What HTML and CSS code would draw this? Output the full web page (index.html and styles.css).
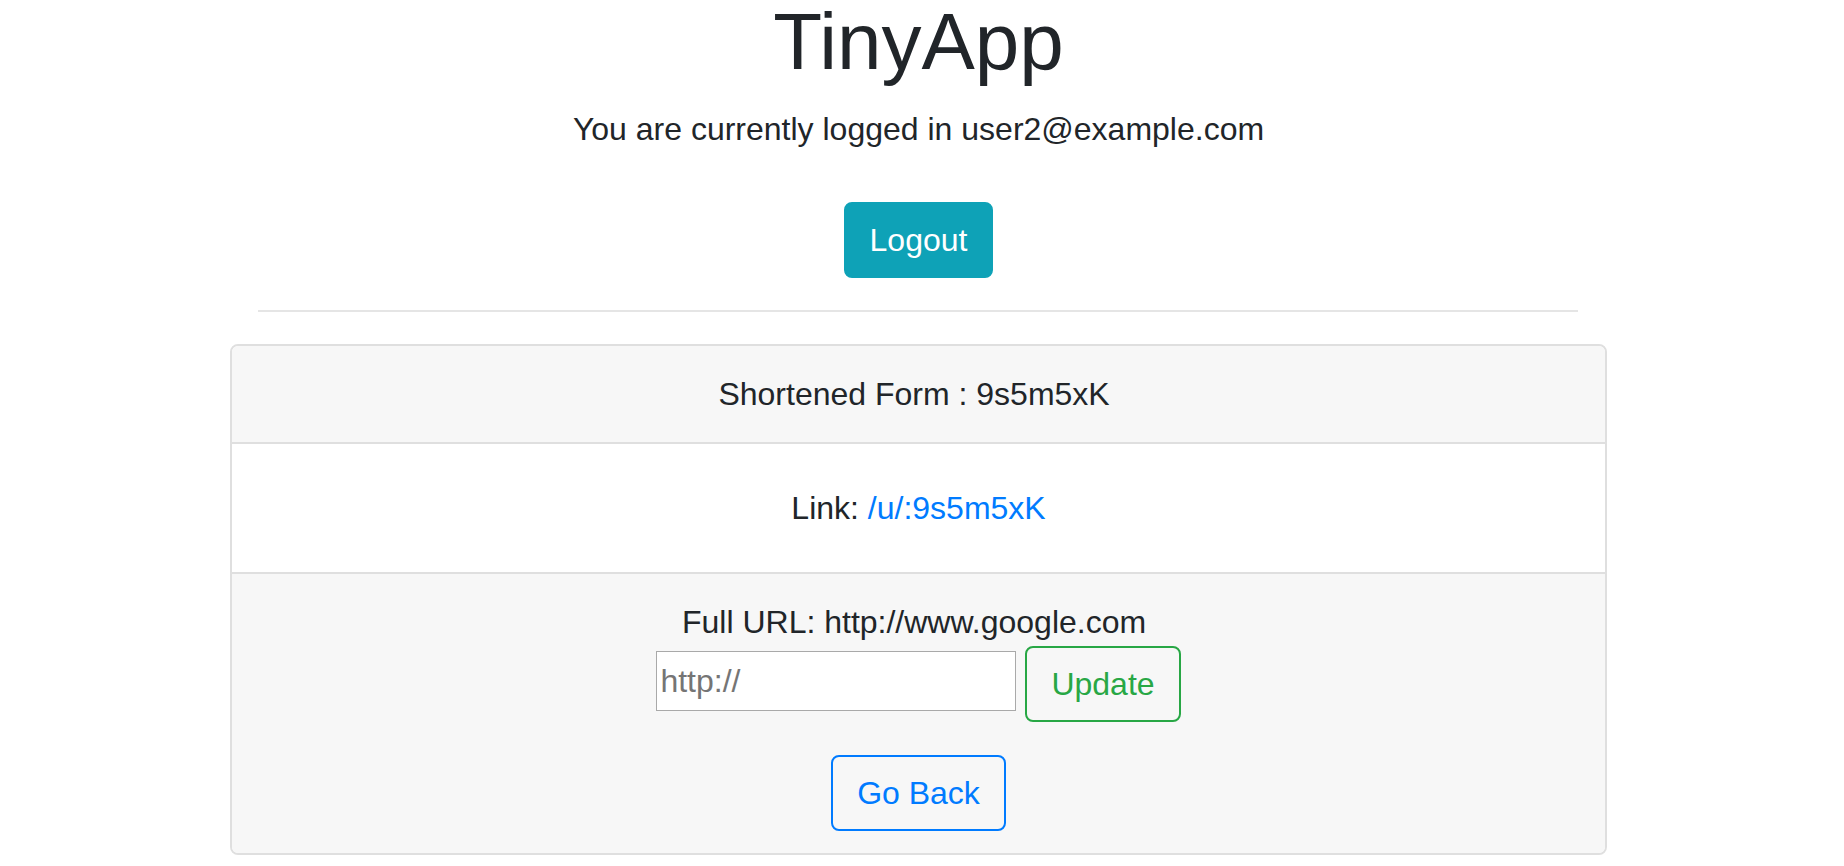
FILE: index.html
```html
<!DOCTYPE html>
<html lang="en">
<head>
<meta charset="utf-8">
<title>TinyApp</title>
<link rel="stylesheet" href="styles.css">
</head>
<body>
<div class="page">
  <header class="top">
    <h1 class="title">TinyApp</h1>
    <p class="status">You are currently logged in user2@example.com</p>
    <form class="logout-form">
      <button type="button" class="btn btn-info">Logout</button>
    </form>
  </header>
  <hr class="divider">
  <section class="card">
    <div class="card-header">Shortened Form : 9s5m5xK&nbsp;</div>
    <div class="card-body">Link: <a class="link" href="#">/u/:9s5m5xK</a></div>
    <div class="card-footer">
      <div class="full-url">Full URL: http://www.google.com&nbsp;</div>
      <form class="update-row">
        <input class="url-input" type="text" placeholder="http://">
        <button type="button" class="btn btn-outline-success">Update</button>
      </form>
      <div class="back-row">
        <button type="button" class="btn btn-outline-primary">Go Back</button>
      </div>
    </div>
  </section>
</div>
</body>
</html>
```

FILE: styles.css
```css
html, body {
  margin: 0;
  padding: 0;
  background: #ffffff;
}

body {
  font-family: "Liberation Sans", Arial, sans-serif;
  font-size: 32px;
  line-height: 48px;
  color: #212529;
}

.page {
  width: 1837px;
  display: flex;
  flex-direction: column;
  align-items: center;
}

.top {
  display: flex;
  flex-direction: column;
  align-items: center;
}

.title {
  margin: 0;
  font-size: 80px;
  line-height: 84px;
  font-weight: 400;
  color: #212529;
}

.status {
  margin: 21px 0 0 0;
}

.logout-form {
  margin: 49px 0 0 0;
}

.btn {
  font-family: "Liberation Sans", Arial, sans-serif;
  font-size: 32px;
  line-height: 48px;
  padding: 12px 24px;
  border: 2px solid transparent;
  border-radius: 8px;
  background: transparent;
  cursor: pointer;
  display: inline-block;
}

.btn-info {
  background: #0ea2b7;
  border-color: #0ea2b7;
  color: #ffffff;
}

.btn-outline-success {
  color: #28a745;
  border-color: #28a745;
}

.btn-outline-primary {
  color: #007bff;
  border-color: #007bff;
}

.divider {
  width: 1320px;
  margin: 32px 0 0 -1px;
  border: 0;
  border-top: 2px solid #e5e5e5;
  height: 0;
}

.card {
  width: 1377px;
  box-sizing: border-box;
  margin-top: 32px;
  border: 2px solid #dfdfdf;
  border-radius: 8px;
  display: flex;
  flex-direction: column;
  text-align: center;
  overflow: hidden;
}

.card-header {
  background: #f7f7f7;
  padding: 24px 40px;
  border-bottom: 2px solid #dfdfdf;
}

.card-body {
  background: #ffffff;
  padding: 40px;
}

.link {
  color: #007bff;
  text-decoration: none;
}

.card-footer {
  background: #f7f7f7;
  border-top: 2px solid #dfdfdf;
  padding: 24px 40px 22px;
  display: flex;
  flex-direction: column;
  align-items: center;
}

.update-row {
  margin: 0;
  display: flex;
  align-items: flex-start;
  gap: 9px;
}

.url-input {
  box-sizing: border-box;
  width: 360px;
  height: 60px;
  margin-top: 5px;
  padding: 0 3px;
  border: 1px solid #a9a9a9;
  background: #ffffff;
  font-family: "Liberation Sans", Arial, sans-serif;
  font-size: 32px;
  color: #495057;
  outline: none;
}

.url-input::placeholder {
  color: #757575;
}

.back-row {
  margin-top: 33px;
}
```
